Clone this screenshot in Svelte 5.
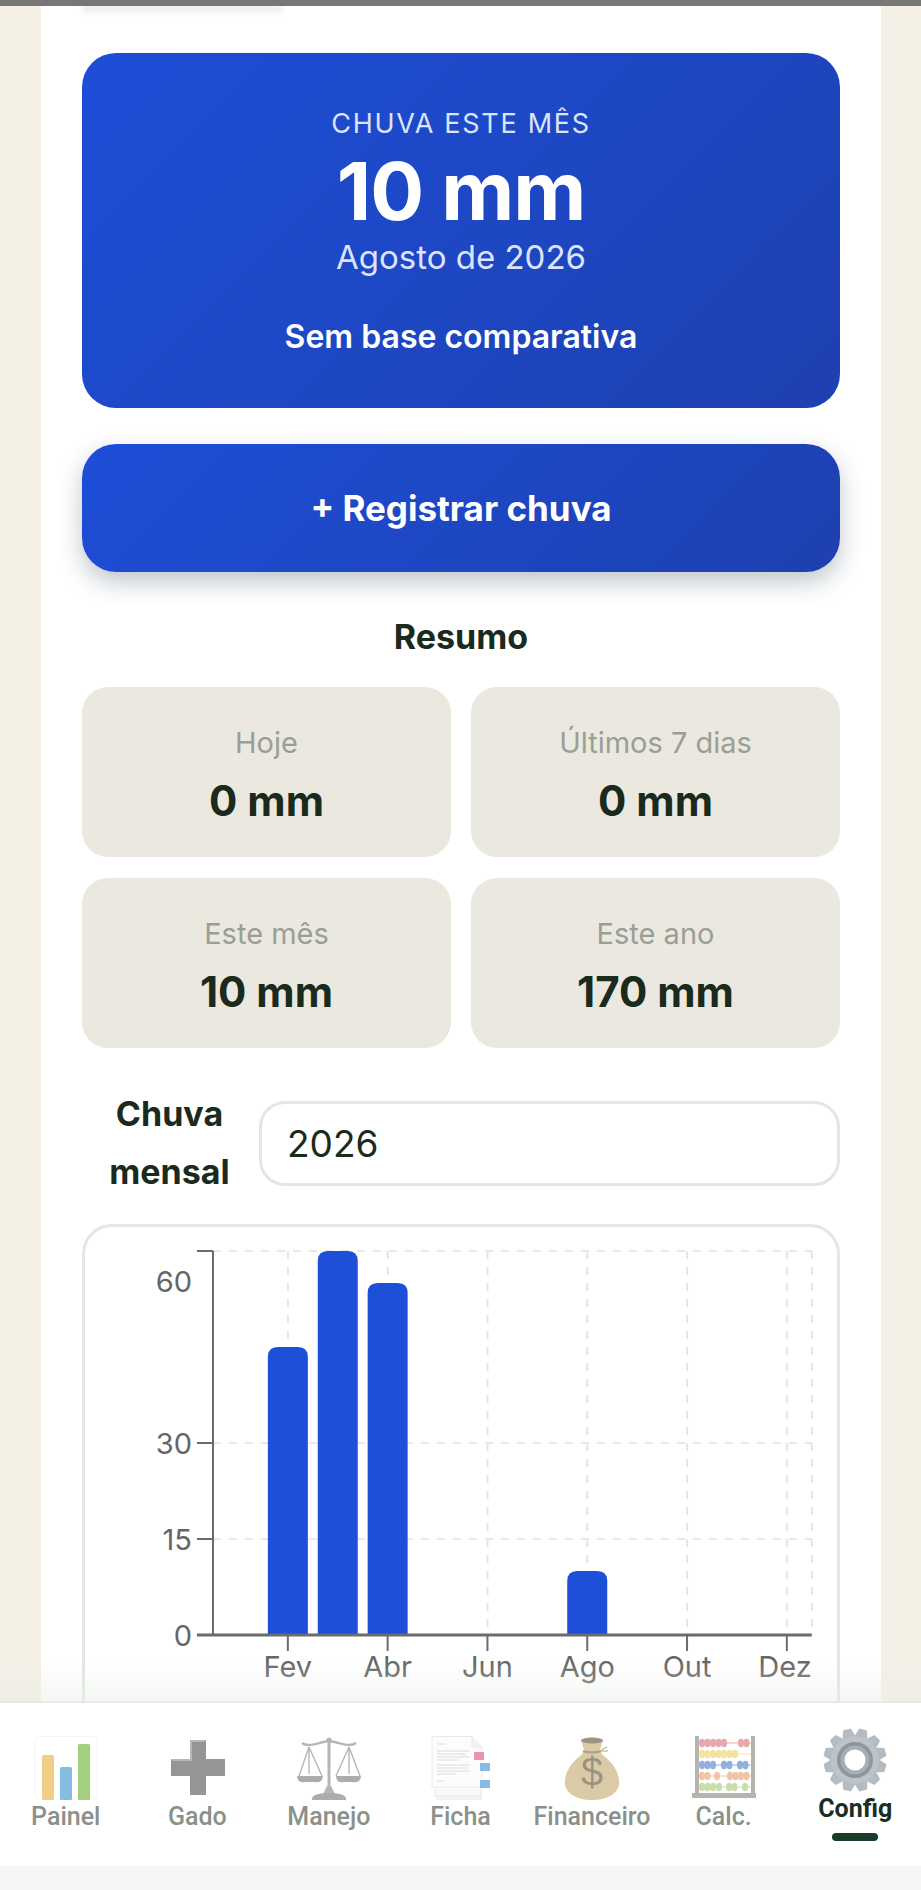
<script>
  const stats = [
    { label: 'Hoje', value: '0 mm' },
    { label: 'Últimos 7 dias', value: '0 mm' },
    { label: 'Este mês', value: '10 mm' },
    { label: 'Este ano', value: '170 mm' }
  ];

  // monthly rain for the chart, index 0 = Jan
  const rain = [0, 45, 60, 55, 0, 0, 0, 10, 0, 0, 0, 0];
  const monthLabels = { 1: 'Fev', 3: 'Abr', 5: 'Jun', 7: 'Ago', 9: 'Out', 11: 'Dez' };

  // chart geometry, in px inside the svg
  const axisX = 128;
  const baseY = 408;
  const band = 49.9;
  const pxPerMm = 6.4;
  const barW = 40;
  const rightX = axisX + band * 12;
  const topY = baseY - 60 * pxPerMm;
  const centerOf = (i) => axisX + band * (i + 0.5);

  const yTicks = [
    { v: 60, y: topY, labelY: topY + 30 },
    { v: 30, y: baseY - 30 * pxPerMm, labelY: baseY - 30 * pxPerMm },
    { v: 15, y: baseY - 15 * pxPerMm, labelY: baseY - 15 * pxPerMm },
    { v: 0, y: baseY, labelY: baseY }
  ];

  function barPath(x, top, w, bottom, r) {
    return `M${x} ${bottom}V${top + r}Q${x} ${top} ${x + r} ${top}H${x + w - r}Q${x + w} ${top} ${x + w} ${top + r}V${bottom}Z`;
  }

  const navItems = [
    { id: 'painel', label: 'Painel' },
    { id: 'gado', label: 'Gado' },
    { id: 'manejo', label: 'Manejo' },
    { id: 'ficha', label: 'Ficha' },
    { id: 'financeiro', label: 'Financeiro' },
    { id: 'calc', label: 'Calc.' },
    { id: 'config', label: 'Config', active: true }
  ];

  // abacus rows: [colour, bead centres]
  const abacus = [
    { y: 7, color: '#d8737c', beads: [10, 15.5, 21, 26.5, 32, 49, 54.5] },
    { y: 18, color: '#ecd36c', beads: [10, 15.5, 21, 26.5, 32, 37.5, 43] },
    { y: 29, color: '#4f82c8', beads: [10, 15.5, 21, 32, 37.5, 48, 53.5] },
    { y: 40, color: '#eba070', beads: [10, 15.5, 25, 38, 43.5, 49, 54.5] },
    { y: 51, color: '#a9cb78', beads: [10, 15.5, 21, 27, 37, 42.5, 53] }
  ];

  const gearTeeth = Array.from({ length: 12 }, (_, i) => i * 30);
</script>

<div class="screen">
  <div class="statusbar"></div>

  <main class="scroller">
    <div class="column">
      <div class="prev-shadow"></div>

      <section class="hero">
        <div class="hero-kicker">CHUVA ESTE MÊS</div>
        <div class="hero-value">10 mm</div>
        <div class="hero-month">Agosto de 2026</div>
        <div class="hero-note">Sem base comparativa</div>
      </section>

      <button class="register">+ Registrar chuva</button>

      <h2 class="summary-title">Resumo</h2>
      <div class="stats">
        {#each stats as s}
          <div class="stat">
            <div class="stat-label">{s.label}</div>
            <div class="stat-value">{s.value}</div>
          </div>
        {/each}
      </div>

      <div class="year-row">
        <label class="year-label" for="year">Chuva mensal</label>
        <input id="year" class="year-input" value="2026" />
      </div>

      <div class="chart-card">
        <svg class="chart" width="754" height="470" viewBox="0 0 754 470">
          <!-- grid -->
          <g class="grid">
            <line x1={axisX} x2={rightX} y1={topY} y2={topY} />
            <line x1={axisX} x2={rightX} y1={yTicks[1].y} y2={yTicks[1].y} />
            <line x1={axisX} x2={rightX} y1={yTicks[2].y} y2={yTicks[2].y} />
            {#each Object.keys(monthLabels) as m}
              <line x1={centerOf(+m)} x2={centerOf(+m)} y1={topY} y2={baseY} />
            {/each}
            <line x1={rightX} x2={rightX} y1={topY} y2={baseY} />
          </g>

          <!-- bars -->
          {#each rain as mm, i}
            {#if mm > 0}
              <path class="bar" d={barPath(centerOf(i) - barW / 2, baseY - mm * pxPerMm, barW, baseY, 10)} />
            {/if}
          {/each}

          <!-- axes -->
          <line class="axis" x1={axisX} x2={axisX} y1={topY} y2={baseY} />
          <line class="axis thick" x1={axisX - 16} x2={rightX} y1={baseY} y2={baseY} />
          {#each yTicks as t}
            {#if t.v !== 0}
              <line class="axis" x1={axisX - 16} x2={axisX} y1={t.y} y2={t.y} />
            {/if}
            <text class="tick" x={axisX - 21} y={t.labelY} text-anchor="end" dominant-baseline="central">{t.v}</text>
          {/each}
          {#each Object.entries(monthLabels) as [m, name]}
            <line class="axis" x1={centerOf(+m)} x2={centerOf(+m)} y1={baseY} y2={baseY + 16} />
            <text class="tick" x={+m === 11 ? rightX : centerOf(+m)} y={baseY + 31} text-anchor={+m === 11 ? 'end' : 'middle'} dominant-baseline="central">{name}</text>
          {/each}
        </svg>
      </div>
    </div>
    <div class="fade"></div>
  </main>

  <nav class="tabbar">
    {#each navItems as item}
      <div class="tab" class:active={item.active}>
        <svg class="tab-icon" width="64" height="64" viewBox="0 0 64 64">
          {#if item.id === 'painel'}
            <rect x="0.5" y="0.5" width="63" height="63" rx="5" fill="#fff" stroke="#eeeeee" />
            <rect x="8" y="19" width="12" height="45" rx="1.5" fill="#e9b040" />
            <rect x="26" y="31" width="12" height="33" rx="1.5" fill="#3a96d0" />
            <rect x="44" y="8" width="12" height="56" rx="1.5" fill="#6ab430" />
          {:else if item.id === 'gado'}
            <path d="M25 4H41V23H60V40H41V59H25V40H6V23H25Z" fill="#555555" />
            <path d="M25 4H41L39 6H27V25H8L6 23H25Z" fill="#8d8d8d" />
          {:else if item.id === 'manejo'}
            <g fill="none" stroke="#8a8a8a">
              <path d="M5 7C12 12 22 6 32 5C42 6 52 12 59 7" stroke-width="2.4" />
              <path d="M32 5V54" stroke-width="3" />
              <path d="M12 11L2 40M12 11L25 40M12 11V38" stroke-width="1.4" />
              <path d="M52 11L39 40M52 11L63 40M52 11V38" stroke-width="1.4" />
            </g>
            <circle cx="32" cy="4" r="2.6" fill="#8a8a8a" />
            <path d="M0 40H26C25 48 20 46 13 46C6 46 1 48 0 40Z" fill="#7a7a7a" />
            <path d="M39 40H64C63 48 58 46 51 46C44 46 40 48 39 40Z" fill="#7a7a7a" />
            <path d="M30 50H34L38 58H26Z" fill="#8a8a8a" />
            <path d="M15 64C14 58 24 57 32 57C40 57 50 58 49 64Z" fill="#7a7a7a" />
          {:else if item.id === 'ficha'}
            <rect x="9" y="54" width="44" height="10" fill="#f0f0f0" stroke="#dcdcdc" />
            <rect x="7" y="50" width="46" height="10" fill="#f6f6f6" stroke="#dcdcdc" />
            <path d="M4 0.5H44L54 11V51H4Z" fill="#fbfbfb" stroke="#dcdcdc" />
            <path d="M44 0.5V11H54" fill="#eeeeee" stroke="#dcdcdc" />
            <g stroke="#c4c4c4" stroke-width="1">
              <path d="M9 8H18M9 15H42M9 18H38M9 21H42M9 24H30M9 29H42M9 32H40M9 35H42M9 38H28M9 45H16" />
            </g>
            <path d="M46 16H56V24H46Z" fill="#e0507a" />
            <path d="M52 27H62V35H52Z" fill="#3f92d8" />
            <path d="M52 44H62V52H52Z" fill="#3f92d8" />
          {:else if item.id === 'financeiro'}
            <path d="M21 4C26 1 38 1 43 4L40 14C41 17 42 18 44 20C54 28 60 38 59 48C58 58 46 64 32 64C18 64 6 58 5 48C4 38 10 28 20 20C22 18 23 17 24 14Z" fill="#c4ab70" />
            <ellipse cx="32" cy="4.5" rx="11" ry="3" fill="#5f5238" />
            <path d="M23 15C28 17 36 17 41 15" fill="none" stroke="#7e6c44" stroke-width="2.4" />
            <path d="M41 14L47 11M41 15L48 15" stroke="#7e6c44" stroke-width="1" />
            <text class="dollar" x="32" y="50" text-anchor="middle">$</text>
          {:else if item.id === 'calc'}
            <rect x="3" y="0" width="4" height="58" fill="#8f857e" />
            <rect x="59" y="0" width="4" height="58" fill="#8f857e" />
            <rect x="0" y="57" width="64" height="5" fill="#8f857e" />
            {#each abacus as row}
              <line x1="7" x2="59" y1={row.y} y2={row.y} stroke={row.color} stroke-width="1.2" />
              {#each row.beads as cx}
                <ellipse {cx} cy={row.y} rx="3.1" ry="4.2" fill={row.color} />
              {/each}
            {/each}
          {:else if item.id === 'config'}
            {#each gearTeeth as a}
              <path d="M28 0.5H36L39 10H25Z" fill="#b4bbc1" transform={`rotate(${a + 15} 32 32)`} />
            {/each}
            <circle cx="32" cy="32" r="24" fill="#bcc3c9" />
            <circle cx="32" cy="32" r="18" fill="#8f959b" />
            <circle cx="32" cy="32" r="14.5" fill="#a8aeb4" />
            <circle cx="32" cy="32" r="10.5" fill="#fff" />
          {/if}
        </svg>
        <span class="tab-label">{item.label}</span>
        {#if item.active}
          <span class="tab-marker"></span>
        {/if}
      </div>
    {/each}
  </nav>

  <div class="gesture-area"></div>
</div>

<style>
  :global(body) {
    margin: 0;
    background: #f5f5f5;
  }

  .screen {
    width: 921px;
    height: 1890px;
    display: flex;
    flex-direction: column;
    overflow: hidden;
    font-family: Inter, "Noto Sans", sans-serif;
    color: #1a2a1c;
  }

  .statusbar {
    height: 6px;
    background: #777777;
    flex: none;
  }

  .scroller {
    position: relative;
    flex: 1;
    min-height: 0;
    overflow: hidden;
    background: #f4f0e6;
    padding: 0 40px 0 41px;
  }

  .column {
    background: #fff;
    height: 100%;
    padding: 0 41px;
    box-sizing: border-box;
  }

  .prev-shadow {
    width: 200px;
    height: 10px;
    margin-bottom: 37px;
    background: linear-gradient(#e6e8e6, #fff);
    filter: blur(2px);
  }

  .hero {
    height: 355px;
    box-sizing: border-box;
    padding-top: 54px;
    border-radius: 34px;
    background: linear-gradient(135deg, #1d4ed8, #1e40af);
    color: #fff;
    text-align: center;
  }

  .hero-kicker {
    font-size: 27px;
    line-height: 34px;
    letter-spacing: 1.7px;
    color: #dbe4fb;
  }

  .hero-value {
    font-size: 80px;
    line-height: 88px;
    font-weight: 700;
    letter-spacing: -1px;
    margin-top: 6px;
  }

  .hero-month {
    font-size: 33px;
    line-height: 40px;
    color: #dbe4fb;
    margin-top: 2px;
  }

  .hero-note {
    font-size: 32px;
    line-height: 40px;
    font-weight: 600;
    margin-top: 40px;
  }

  .register {
    display: block;
    width: 100%;
    height: 128px;
    margin-top: 36px;
    border: none;
    border-radius: 34px;
    background: linear-gradient(135deg, #1d4ed8, #1e40af);
    box-shadow: 0 10px 24px rgba(30, 50, 70, 0.28);
    color: #fff;
    font-family: inherit;
    font-size: 35px;
    font-weight: 700;
  }

  .summary-title {
    margin: 46px 0 0;
    text-align: center;
    font-size: 34px;
    line-height: 38px;
    font-weight: 700;
  }

  .stats {
    display: grid;
    grid-template-columns: 1fr 1fr;
    gap: 21px 20px;
    margin-top: 31px;
  }

  .stat {
    height: 170px;
    box-sizing: border-box;
    padding-top: 39px;
    border-radius: 26px;
    background: #ebe8e0;
    text-align: center;
  }

  .stat-label {
    font-size: 29px;
    line-height: 34px;
    color: #9a9f95;
  }

  .stat-value {
    font-size: 42px;
    line-height: 50px;
    font-weight: 700;
    margin-top: 16px;
  }

  .year-row {
    display: flex;
    align-items: center;
    gap: 2px;
    margin-top: 37px;
  }

  .year-label {
    width: 175px;
    flex: none;
    text-align: center;
    font-size: 34px;
    line-height: 58px;
    font-weight: 700;
  }

  .year-input {
    flex: 1;
    min-width: 0;
    height: 85px;
    box-sizing: border-box;
    padding: 0 25px;
    border: 3px solid #e0e8df;
    border-radius: 26px;
    background: #fff;
    color: #1a2a1c;
    font-family: inherit;
    font-size: 37px;
  }

  .chart-card {
    margin-top: 23px;
    height: 600px;
    border: 3px solid #e2e8e0;
    border-radius: 30px;
    box-sizing: border-box;
  }

  .chart {
    display: block;
  }

  .grid line {
    stroke: #e6e6e6;
    stroke-width: 2;
    stroke-dasharray: 8 8;
  }

  .bar {
    fill: #1d4fd8;
  }

  .axis {
    stroke: #6b6b6b;
    stroke-width: 2;
  }

  .axis.thick {
    stroke-width: 3;
  }

  .tick {
    font-family: Inter, sans-serif;
    font-size: 29px;
    fill: #666666;
  }

  .fade {
    position: absolute;
    left: 0;
    right: 0;
    bottom: 0;
    height: 40px;
    background: linear-gradient(rgba(232, 238, 232, 0), rgba(232, 238, 232, 0.45));
  }

  .tabbar {
    flex: none;
    height: 165px;
    box-sizing: border-box;
    display: grid;
    grid-template-columns: repeat(7, 1fr);
    background: #fff;
    border-top: 2px solid #e6ebe5;
    font-family: Roboto, "Noto Sans", sans-serif;
  }

  .tab {
    display: flex;
    flex-direction: column;
    align-items: center;
    padding-top: 33px;
  }

  .tab-icon {
    display: block;
    opacity: 0.62;
  }

  .tab-label {
    margin-top: 2px;
    font-size: 25px;
    line-height: 30px;
    font-weight: 500;
    color: #8a918a;
  }

  .tab.active {
    padding-top: 25px;
  }

  .tab.active .tab-icon {
    opacity: 1;
  }

  .tab.active .tab-label {
    color: #1a2e22;
    font-weight: 700;
  }

  .tab-marker {
    width: 46px;
    height: 8px;
    margin-top: 9px;
    border-radius: 4px;
    background: #1a3d2b;
  }

  .dollar {
    font-family: "Liberation Sans", sans-serif;
    font-size: 40px;
    fill: #5f5238;
  }

  .gesture-area {
    flex: none;
    height: 24px;
    background: #f5f5f5;
  }
</style>
